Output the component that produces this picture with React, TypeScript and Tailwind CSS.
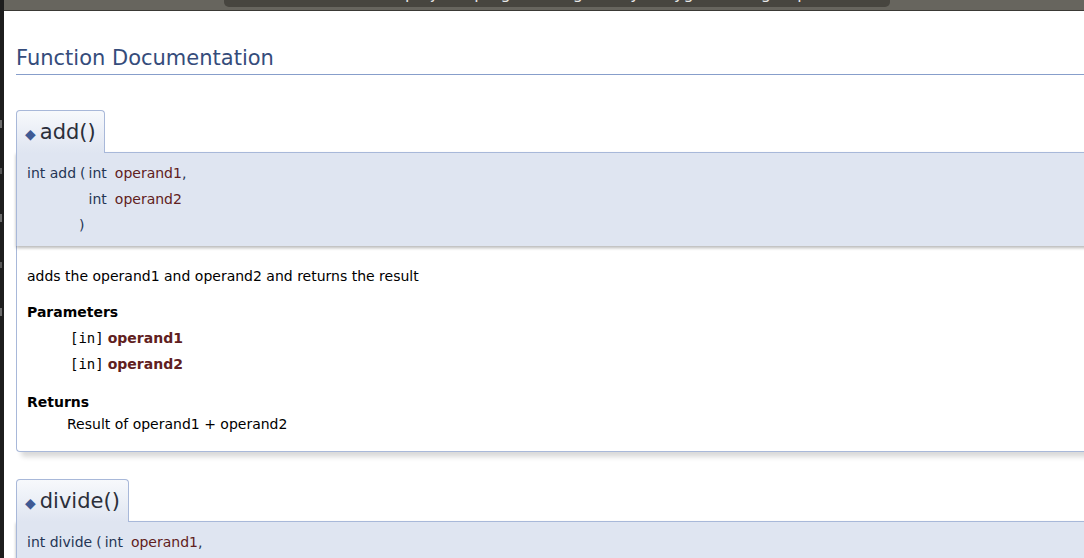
import React from 'react';

type Param = { type: string; name: string };

const FUNCS: {
  name: string;
  ret: string;
  params: Param[];
  brief: string;
  docParams: string[];
  returns: string;
  tabW: string;
}[] = [
  {
    name: 'add',
    ret: 'int',
    params: [
      { type: 'int', name: 'operand1' },
      { type: 'int', name: 'operand2' },
    ],
    brief: 'adds the operand1 and operand2 and returns the result',
    docParams: ['operand1', 'operand2'],
    returns: 'Result of operand1 + operand2',
    tabW: 'w-[89px]',
  },
  {
    name: 'divide',
    ret: 'int',
    params: [
      { type: 'int', name: 'operand1' },
      { type: 'int', name: 'operand2' },
    ],
    brief: 'divides operand1 by operand2 and returns the result',
    docParams: ['operand1', 'operand2'],
    returns: 'Result of operand1 / operand2',
    tabW: 'w-[113px]',
  },
];

function MemItem({ fn }: { fn: (typeof FUNCS)[number] }) {
  return (
    <div className="mb-[27px]">
      {/* title tab */}
      <div
        className={`relative z-20 -mb-px flex h-[43px] ${fn.tabW} items-center rounded-t-[4px] border border-b-0 border-[#A8B8D9] bg-gradient-to-b from-[#F7F9FC] to-[#DFE5F1] pl-[8px]`}
      >
        <span className="mr-[4px] mt-[4px] text-[14px] leading-none text-[#3F5A94]">◆</span>
        <span className="text-[21px] leading-none text-[#2B2F3A]">{fn.name}()</span>
      </div>

      {/* prototype */}
      <div className="relative z-10 border-l border-t border-[#A8B8D9] bg-[#DFE5F1] pb-[8px] pl-[10px] pt-[7px] shadow-[0_2px_3px_rgba(0,0,0,0.28)]">
        <div className="grid w-fit grid-cols-[auto_auto_auto_auto] text-[14px] leading-[26px] text-[#253555]">
          <div className="pr-[4px]">
            {fn.ret} {fn.name}
          </div>
          <div className="pr-[3px]">(</div>
          <div className="pr-[8px]">{fn.params[0].type}</div>
          <div className="text-[#602020]">
            {fn.params[0].name}
            <span className="text-[#253555]">,</span>
          </div>
          {fn.params.slice(1).map((p) => (
            <React.Fragment key={p.name}>
              <div />
              <div />
              <div className="pr-[8px]">{p.type}</div>
              <div className="text-[#602020]">{p.name}</div>
            </React.Fragment>
          ))}
          <div />
          <div className="-ml-px">)</div>
          <div />
          <div />
        </div>
      </div>

      {/* doc */}
      <div className="rounded-bl-[4px] border-b border-l border-[#A8B8D9] bg-white pb-[16px] pl-[10px] pt-[19px] text-[14px] leading-[22px] text-black shadow-[5px_5px_5px_rgba(0,0,0,0.15)]">
        <p>{fn.brief}</p>
        <div className="mt-[14px] font-bold">Parameters</div>
        <div className="mt-[2px] pl-[43px]">
          {fn.docParams.map((p) => (
            <div key={p} className="flex h-[26px] items-center">
              <span className="pr-[4px] font-['DejaVu_Sans_Mono',monospace] text-[14px]">[in]</span>
              <span className="font-bold text-[#602020]">{p}</span>
            </div>
          ))}
        </div>
        <div className="mt-[14px] font-bold">Returns</div>
        <div className="pl-[40px]">{fn.returns}</div>
      </div>
    </div>
  );
}

export default function App() {
  return (
    <div className="relative flex h-[558px] w-[1084px] overflow-hidden bg-white font-['DejaVu_Sans',sans-serif]">
      {/* left edge of the neighbouring window */}
      <div className="flex w-[4px] shrink-0 flex-col gap-[40px] bg-[#1d1d1d] pt-[120px]">
        <div className="h-[8px] w-[2px] bg-[#6a6a6a]" />
        <div className="h-[6px] w-[2px] bg-[#555]" />
        <div className="h-[8px] w-[2px] bg-[#6a6a6a]" />
        <div className="h-[6px] w-[2px] bg-[#555]" />
        <div className="h-[8px] w-[2px] bg-[#6a6a6a]" />
      </div>

      <div className="flex min-w-0 flex-1 flex-col">
        {/* browser bar, cut off */}
        <div className="flex h-[11px] shrink-0 border-b border-[#3a3935] bg-[#67655e] pl-[220px]">
          <div className="h-[7px] w-[666px] overflow-hidden rounded-b-[5px] bg-[#47453f]">
            <div className="-mt-[16px] pl-[44px] text-[16px] leading-[20px] text-[#e8e8e8]">
              file:///home/user/projects/programming/library/doxygen/html/group.html
            </div>
          </div>
        </div>

        {/* page */}
        <div className="w-[1100px] pl-[12px] pt-[35px]">
          <h2 className="border-b border-[#879ECB] pb-[3px] text-[21px] leading-[25px] text-[#354C7B]">
            Function Documentation
          </h2>
          <div className="mt-[35px]">
            {FUNCS.map((fn) => (
              <MemItem key={fn.name} fn={fn} />
            ))}
          </div>
        </div>
      </div>

      {/* mouse pointer */}
      <svg
        className="absolute left-[454px] top-[184px]"
        width="14"
        height="20"
        viewBox="0 0 14 20"
      >
        <path
          d="M0.5 0.5 L0.5 15.5 L4 12 L6.8 18.5 L9 17.5 L6.3 11.3 L11 11.3 Z"
          fill="#ffffff"
          stroke="#000000"
          strokeWidth="1"
          strokeLinejoin="round"
        />
      </svg>
    </div>
  );
}
